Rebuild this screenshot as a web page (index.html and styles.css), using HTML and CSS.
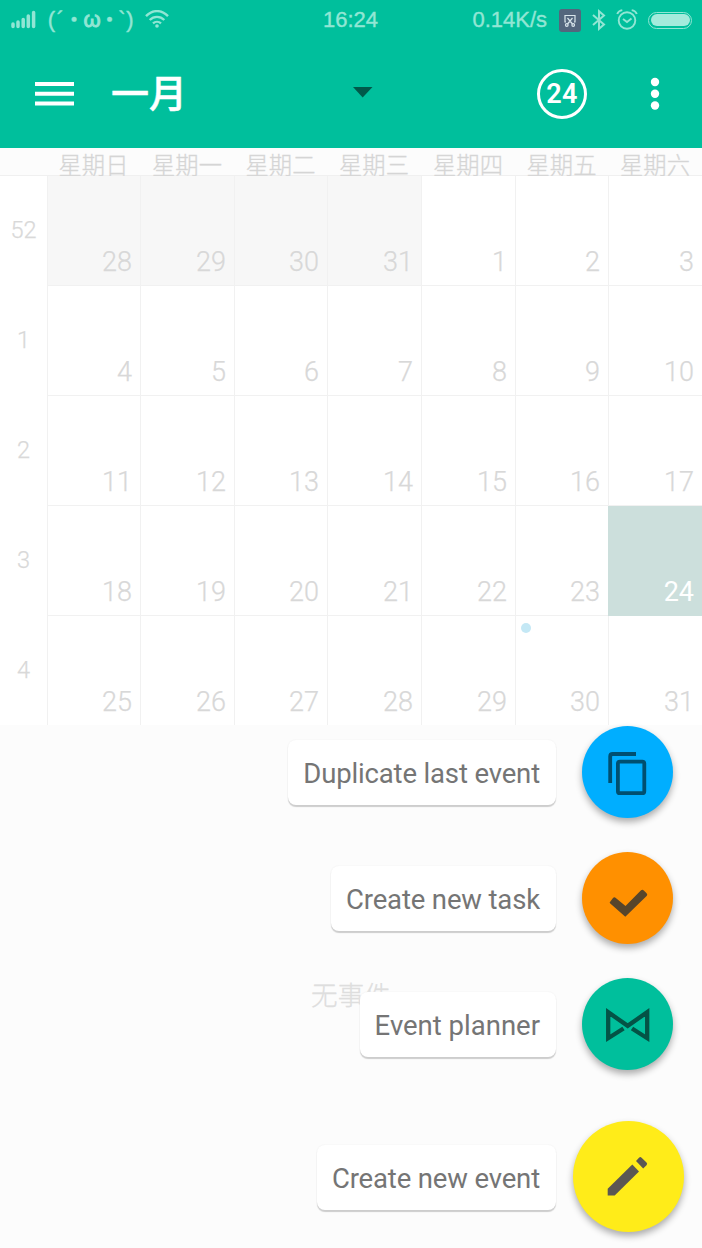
FILE: index.html
```html
<!DOCTYPE html>
<html lang="zh-CN">
<head>
<meta charset="utf-8">
<title>一月</title>
<link rel="stylesheet" href="styles.css">
</head>
<body>
<div class="screen">
  <header class="header">
    <div class="status">
      <div class="status-left">
        <svg class="signal" width="26" height="20" viewBox="0 0 26 20"><path d="M2 14v2.500M7 12V16.500M12.200 9.500V16.500M17.300 6V16.500M22.600 2.500V16.500" stroke="currentColor" stroke-width="3.500" stroke-linecap="round" fill="none"/></svg>
        <span class="carrier"><span>(</span><span>´</span><span>・</span><span class="omega">ω</span><span>・</span><span>`</span><span>)</span></span>
        <svg class="wifi" width="24" height="20" viewBox="0 0 24 20" fill="none" stroke="currentColor" stroke-width="2.400"><path d="M1 6.200C7.500-.6 16.500-.6 23 6.200M4.700 10C9 5.800 15 5.800 19.300 10M8 13.400C10.300 11.300 13.700 11.300 16 13.400"/><circle cx="12" cy="16" r="1.800" fill="currentColor" stroke="none"/></svg>
      </div>
      <span class="time">16:24</span>
      <div class="status-right">
        <span>0.14K/s</span>
        <svg class="shot" width="22" height="23" viewBox="0 0 22 23"><rect width="22" height="23" rx="3" fill="#53667d"/><g fill="none" stroke="#d9e6ec" stroke-width="1.200"><path d="M7 13H6V6.500H16V13H15M8.500 9l5 6M13.500 9l-5 6"/><circle cx="7.800" cy="16" r="1.300"/><circle cx="14.200" cy="16" r="1.300"/></g></svg>
        <svg class="bt" width="14" height="22" viewBox="0 0 14 22" fill="none" stroke="currentColor" stroke-width="2"><path d="M1 6L12 15.500 7 19.800V2.200L12 6.500 1 16"/></svg>
        <svg class="alarm" width="22" height="22" viewBox="0 0 22 22" fill="none" stroke="currentColor" stroke-width="1.900"><circle cx="11" cy="11.500" r="8.300"/><path d="M7 10l4 3 4.500-3.500M1.200 5C2 3 4 1.500 6.300 1.100M20.800 5C20 3 18 1.500 15.700 1.100"/></svg>
        <span class="battery"><span class="charge"></span></span>
      </div>
    </div>
    <div class="toolbar">
      <svg class="menu" width="40" height="25" viewBox="0 0 40 25"><path d="M0 2H39M0 11.800H39M0 21.400H39" stroke="#fff" stroke-width="4"/></svg>
      <h1 class="title">一月</h1>
      <svg class="caret" width="20" height="11" viewBox="0 0 20 11"><path d="M0 0H19.500L9.700 10.500z" fill="#00594a"/></svg>
      <span class="today">24</span>
      <svg class="more" width="10" height="34" viewBox="0 0 10 34" fill="#fff"><circle cx="5" cy="5" r="4.200"/><circle cx="5" cy="16.700" r="4.200"/><circle cx="5" cy="28.500" r="4.200"/></svg>
    </div>
  </header>

  <div class="weekdays"><span></span><span>星期日</span><span>星期一</span><span>星期二</span><span>星期三</span><span>星期四</span><span>星期五</span><span>星期六</span></div>

  <main class="month">
    <span class="week">52</span><span class="day out">28</span><span class="day out">29</span><span class="day out">30</span><span class="day out">31</span><span class="day">1</span><span class="day">2</span><span class="day">3</span>
    <span class="week">1</span><span class="day">4</span><span class="day">5</span><span class="day">6</span><span class="day">7</span><span class="day">8</span><span class="day">9</span><span class="day">10</span>
    <span class="week">2</span><span class="day">11</span><span class="day">12</span><span class="day">13</span><span class="day">14</span><span class="day">15</span><span class="day">16</span><span class="day">17</span>
    <span class="week">3</span><span class="day">18</span><span class="day">19</span><span class="day">20</span><span class="day">21</span><span class="day">22</span><span class="day">23</span><span class="day selected">24</span>
    <span class="week">4</span><span class="day">25</span><span class="day">26</span><span class="day">27</span><span class="day">28</span><span class="day">29</span><span class="day"><i class="dot"></i>30</span><span class="day">31</span>
  </main>

  <section class="agenda">无事件</section>

  <nav class="actions">
    <div class="action">
      <span class="label tight">Duplicate last event</span>
      <span class="fab blue"><svg width="91" height="92" viewBox="0 0 91 92" fill="none" stroke="#004f70" stroke-width="3.800"><path d="M28.200 57V30.500Q28.200 28 30.700 28H54" /><rect x="35.900" y="35.700" width="26.400" height="31.500" rx="2"/></svg></span>
    </div>
    <div class="action">
      <span class="label tight">Create new task</span>
      <span class="fab orange"><svg width="91" height="92" viewBox="0 0 91 92" fill="#57452b"><path d="M28 49.900L31 46Q32.400 44.600 33.800 46L43.500 54 58.800 38.400Q60.300 37 61.800 38.400L64.600 41.200Q66 42.600 64.600 44L43.300 64.700 28 51.300Q27.300 50.600 28 49.900z"/></svg></span>
    </div>
    <div class="action">
      <span class="label">Event planner</span>
      <span class="fab teal"><svg width="91" height="92" viewBox="0 0 91 92" fill="none" stroke="#045346" stroke-width="4.300"><path d="M41.500 50.500L26.200 60.200V34.200L45.700 47.800 65.200 34.200V60.200L50 50.500"/></svg></span>
    </div>
    <div class="action main">
      <span class="label tight">Create new event</span>
      <span class="fab yellow"><svg width="111" height="111" viewBox="0 0 111 111" fill="#5b5753"><path d="M34.700 74.500V67.800L59.300 43.500 66 50.500 41.700 74.500z"/><path d="M63 39.900l3-3.200q1.300-1.300 2.600 0l4.900 4.900q1.300 1.300 0 2.600l-3.300 3.200z"/></svg></span>
    </div>
  </nav>
</div>
</body>
</html>
```
FILE: styles.css
```css
* { box-sizing: border-box; }
body { margin: 0; font-family: Roboto, "Noto Sans CJK SC", sans-serif; }
.screen { position: relative; width: 702px; height: 1248px; overflow: hidden; background: #fcfcfc; display: flex; flex-direction: column; }
svg { display: block; flex: none; }

.header { height: 148px; background: #00bf9c; }
.status { height: 40px; display: grid; grid-template-columns: 1fr auto 1fr; align-items: center; padding: 0 10px 0 11px; color: #91e6d4; font: 22px/40px "Liberation Sans", Arial, sans-serif; -webkit-text-stroke: .4px #91e6d4; }
.status-left { display: flex; align-items: center; }
.carrier { display: grid; grid-template-columns: 9px 9px 18px 18px 17px 8px 8px; width: 87px; margin: 0 11px 0 10px; justify-items: center; font-family: "Liberation Sans", "Noto Sans CJK SC", sans-serif; }
.carrier span { line-height: 40px; height: 40px; }
.carrier .omega { -webkit-text-stroke-width: .9px; }
.time { margin-right: 2px; }
.status-right { display: flex; align-items: center; justify-content: flex-end; }
.shot { margin-left: 12px; }
.bt { margin-left: 11px; }
.alarm { margin-left: 10px; }
.battery { width: 44px; height: 17px; margin-left: 10px; padding: 1.500px; border: 1.500px solid #91e6d4; border-radius: 9px; }
.charge { display: block; height: 100%; border-radius: 6px; background: #a4ebdc; }

.toolbar { height: 108px; display: flex; align-items: center; padding: 0 42px 0 35px; }
.title { margin: -7px 0 0 36px; font: 500 38px/60px "Noto Sans CJK SC", sans-serif; color: #fff; width: 76px; -webkit-text-stroke: .5px #fff; }
.caret { margin: -3px 0 0 166px; }
.today { width: 50px; height: 50px; margin-left: 164px; border: 3px solid #fff; border-radius: 50%; color: #fff; font-size: 27px; font-weight: 600; line-height: 44px; letter-spacing: .4px; text-align: center; }
.more { margin-left: auto; }

.weekdays, .month { display: grid; grid-template-columns: 47px 93px 94px 93px 94px 94px 93px 94px; }
.weekdays { height: 28px; border-bottom: 1px solid #f0f0f0; color: #d4d4d4; font: 300 23.300px/34px "Noto Sans CJK SC", sans-serif; text-align: center; -webkit-text-stroke: .3px #d8d8d8; }
.weekdays span { height: 34px; margin-top: -1px; }
.month { height: 549px; overflow: hidden; grid-auto-rows: 110px; background: #fff; }
.week { color: #d9d9d9; font-size: 23.500px; font-weight: 350; line-height: 109px; text-align: center; }
.day { position: relative; border-left: 1px solid #f1f1f1; border-bottom: 1px solid #f1f1f1; color: #d8d8d8; font-size: 27px; font-weight: 350; line-height: 32px; padding: 70px 8px 0 0; text-align: right; }
.out { background: #f7f7f7; }
.selected { background: #ccdfdc; border-color: #ccdfdc; color: #fff; font-weight: 400; }
.week, .day:not(.selected) { -webkit-text-stroke: .25px #d8d8d8; }
.dot { position: absolute; left: 5px; top: 7px; width: 10px; height: 10px; border-radius: 50%; background: #c4e8f5; }

.agenda { flex: 1; display: flex; align-items: center; justify-content: center; padding-top: 15px; color: #dedede; font: 300 26.600px/40px "Noto Sans CJK SC", sans-serif; -webkit-text-stroke: .3px #dedede; }

.actions { position: absolute; right: 18px; top: 726px; display: flex; flex-direction: column; gap: 34px; }
.action { height: 92px; display: flex; align-items: center; justify-content: flex-end; }
.label { height: 65px; margin-top: 1px; padding: 0 16px 0 15px; background: #fff; border-radius: 8px; box-shadow: 0 2px 1px #cdcdcd, 0 0 2px #eee; color: #757575; font-size: 27.500px; line-height: 68px; white-space: nowrap; }
.tight { letter-spacing: -.15px; }
.fab { width: 91px; height: 92px; margin: 0 11px 0 26px; border-radius: 50%; box-shadow: 0 4px 7px rgba(0, 0, 0, .32); }
.main { height: 111px; margin-top: 17px; }
.main .fab { width: 111px; height: 111px; margin: 0 0 0 17px; }
.main .label { margin-top: 2px; }
.blue { background: #00aeff; }
.orange { background: #ff9000; }
.teal { background: #00bf9c; }
.yellow { background: #ffec19; }
```
